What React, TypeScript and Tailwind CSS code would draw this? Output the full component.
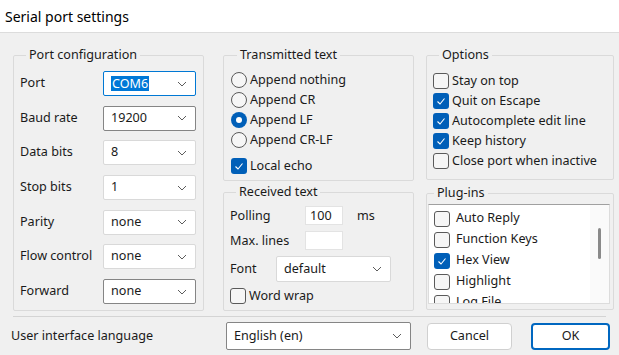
import React from 'react';

type Tone = 'light' | 'dark' | 'focus';

const Chevron = () => (
  <svg width="10" height="6" viewBox="0 0 10 6" className="shrink-0">
    <polyline points="1,1 5,5 9,1" fill="none" stroke="#5c5c5c" strokeWidth="1" />
  </svg>
);

const Combo = ({ value, tone = 'light', className = '' }: { value: string; tone?: Tone; className?: string }) => {
  const border =
    tone === 'focus'
      ? 'border-[#0078d4]'
      : tone === 'dark'
        ? 'border-[#858585]'
        : 'border-[#d9d9d9]';
  return (
    <div
      className={`flex items-center justify-between bg-white border ${border} rounded-[2px] pl-[7px] pr-[8px] ${className}`}
    >
      {tone === 'focus' ? (
        <span className="bg-[#0078d7] text-white px-[1px] leading-[15px]">{value}</span>
      ) : (
        <span>{value}</span>
      )}
      <Chevron />
    </div>
  );
};

const Check = ({ on }: { on?: boolean }) =>
  on ? (
    <span className="w-[16px] h-[16px] rounded-[3px] bg-[#005fb8] flex items-center justify-center shrink-0">
      <svg width="16" height="16" viewBox="0 0 16 16">
        <polyline points="4.5,8.5 7,11 11.5,5.5" fill="none" stroke="white" strokeWidth="1.1" />
      </svg>
    </span>
  ) : (
    <span className="w-[16px] h-[16px] rounded-[3px] border border-[#5a5a5a] bg-[#f6f6f6] shrink-0" />
  );

const Radio = ({ on }: { on?: boolean }) =>
  on ? (
    <span className="w-[16px] h-[16px] rounded-full bg-[#005fb8] flex items-center justify-center shrink-0">
      <span className="w-[6px] h-[6px] rounded-full bg-white" />
    </span>
  ) : (
    <span className="w-[16px] h-[16px] rounded-full border border-[#5a5a5a] bg-[#f6f6f6] shrink-0" />
  );

const Group = ({ title, className = '', children }: { title: string; className?: string; children: React.ReactNode }) => (
  <fieldset className={`border border-[#dadada] rounded-[2px] ${className}`}>
    <legend className="ml-[6px] px-[3px] leading-[16px]">{title}</legend>
    {children}
  </fieldset>
);

const portRows: { label: string; value: string; tone: Tone }[] = [
  { label: 'Port', value: 'COM6', tone: 'focus' },
  { label: 'Baud rate', value: '19200', tone: 'dark' },
  { label: 'Data bits', value: '8', tone: 'light' },
  { label: 'Stop bits', value: '1', tone: 'light' },
  { label: 'Parity', value: 'none', tone: 'light' },
  { label: 'Flow control', value: 'none', tone: 'light' },
  { label: 'Forward', value: 'none', tone: 'dark' },
];

const radios = ['Append nothing', 'Append CR', 'Append LF', 'Append CR-LF'];

const options = [
  { label: 'Stay on top', on: false },
  { label: 'Quit on Escape', on: true },
  { label: 'Autocomplete edit line', on: true },
  { label: 'Keep history', on: true },
  { label: 'Close port when inactive', on: false },
];

const plugins = [
  { label: 'Auto Reply', on: false },
  { label: 'Function Keys', on: false },
  { label: 'Hex View', on: true },
  { label: 'Highlight', on: false },
  { label: 'Log File', on: false },
];

export default function App() {
  return (
    <div className="w-[619px] h-[355px] overflow-hidden bg-[#f0f0f0] text-[#1a1a1a] text-[12.6px] font-['Noto_Sans',sans-serif]">
      {/* title bar */}
      <div className="h-[33px] bg-white border-b border-[#dcdcdc] flex items-center pl-[5px] text-[14px] text-black">
        Serial port settings
      </div>

      <div className="flex pl-[13px] pt-[14px]">
        {/* Port configuration */}
        <Group title="Port configuration" className="w-[191px] h-[264px] pl-[6px] pt-[8px]">
          <div className="flex flex-col gap-[9.7px]">
            {portRows.map((r) => (
              <div key={r.label} className="flex items-center h-[25px]">
                <span className="w-[83px]">{r.label}</span>
                <Combo value={r.value} tone={r.tone} className="w-[93px] h-[25px]" />
              </div>
            ))}
          </div>
        </Group>

        {/* middle column */}
        <div className="ml-[19px] w-[191px] flex flex-col gap-[3px]">
          <Group title="Transmitted text" className="h-[134px] pl-[7px] pt-[7px]">
            {radios.map((r) => (
              <div key={r} className="flex items-center h-[20px] gap-[3px]">
                <Radio on={r === 'Append LF'} />
                <span>{r}</span>
              </div>
            ))}
            <div className="flex items-center h-[20px] gap-[3px] mt-[6px]">
              <Check on />
              <span>Local echo</span>
            </div>
          </Group>

          <Group title="Received text" className="h-[127px] pl-[6px] pt-[6px]">
            <div className="flex items-center h-[19px]">
              <span className="w-[75px] pt-[2px]">Polling</span>
              <div className="w-[38px] h-[19px] bg-white border border-[#e3e3e3] pl-[4px] leading-[17px]">100</div>
              <span className="ml-[14px] pt-[2px]">ms</span>
            </div>
            <div className="flex items-center h-[19px] mt-[6px]">
              <span className="w-[75px] pt-[2px]">Max. lines</span>
              <div className="w-[38px] h-[19px] bg-white border border-[#e3e3e3]" />
            </div>
            <div className="flex items-center h-[26px] mt-[6px]">
              <span className="w-[46px]">Font</span>
              <Combo value="default" className="w-[115px] h-[26px]" />
            </div>
            <div className="flex items-center h-[20px] gap-[3px] mt-[4px]">
              <Check />
              <span>Word wrap</span>
            </div>
          </Group>
        </div>

        {/* right column */}
        <div className="ml-[12px] w-[188px] flex flex-col gap-[5px]">
          <Group title="Options" className="h-[133px] pl-[6px] pt-[8px]">
            {options.map((o) => (
              <div key={o.label} className="flex items-center h-[20px] gap-[3px]">
                <Check on={o.on} />
                <span>{o.label}</span>
              </div>
            ))}
          </Group>

          <Group title="Plug-ins" className="h-[125px] pl-[1px] pt-[3px]">
            <div className="w-[182px] h-[100px] bg-white border border-[#dcdcdc] border-t-[#a0a0a0] flex overflow-hidden">
              <div className="flex-1 pl-[5px] pt-[3px]">
                {plugins.map((p) => (
                  <div key={p.label} className="flex items-center h-[21px] gap-[6px]">
                    <Check on={p.on} />
                    <span>{p.label}</span>
                  </div>
                ))}
              </div>
              <div className="w-[19px] bg-[#fafafa] flex justify-center pt-[23px]">
                <div className="w-[3px] h-[31px] rounded-full bg-[#8a8a8a]" />
              </div>
            </div>
          </Group>
        </div>
      </div>

      {/* separator */}
      <div className="mx-[13px] mt-[5px] border-t border-[#d4d4d4]" />

      {/* bottom row */}
      <div className="flex items-center pl-[11px] mt-[5px]">
        <span className="w-[215px]">User interface language</span>
        <Combo value="English (en)" tone="dark" className="w-[185px] h-[28px]" />
        <button className="ml-[16px] w-[85px] h-[27px] bg-white border border-[#d0d0d0] rounded-[4px]">
          Cancel
        </button>
        <button className="ml-[19px] w-[79px] h-[27px] bg-white border-2 border-[#0067c0] rounded-[4px]">
          OK
        </button>
      </div>
    </div>
  );
}
